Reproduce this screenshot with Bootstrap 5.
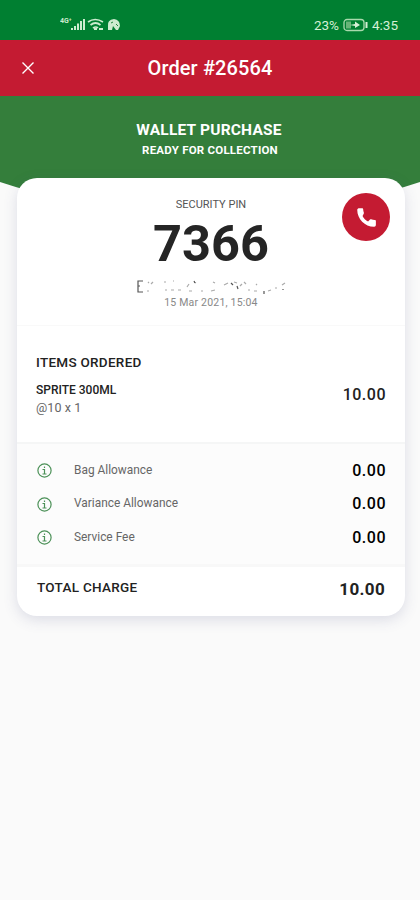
<!DOCTYPE html>
<html lang="en">
<head>
<meta charset="utf-8">
<meta name="viewport" content="width=device-width, initial-scale=1">
<title>Order #26564</title>
<link href="https://cdn.jsdelivr.net/npm/bootstrap@5.3.0/dist/css/bootstrap.min.css" rel="stylesheet">
<style>
body{font-family:Roboto,"Liberation Sans",sans-serif;background:#fafafa;color:#222;height:900px;overflow:hidden}
.status{height:40px;background:#007f31;color:#d5efd5;font-size:13.5px;padding:10px 22px 0 60px}
.clock{height:30px}
.topbar{height:56px;background:#c41b32;padding:0 21px}
.topbar h1{font-size:20px;font-weight:500;letter-spacing:.12px}
.side{width:14px}
.hero{height:97px;background:#347e3b;clip-path:path("M0 0H420V86Q405 91 390 95H30Q15 91 0 86Z");color:#fff;padding:24px 2px 0 0}
.kind{font-size:15.5px;line-height:20px;font-weight:700;letter-spacing:.2px}
.ready{font-size:11.5px;line-height:20px;font-weight:700;letter-spacing:.22px;padding-left:2px}
.order{margin:-15px 15px 0 17px;height:438px;border-radius:20px;border:0;box-shadow:0 4px 14px rgba(70,75,130,.17);overflow:hidden}
.pin-area{height:148px;padding-top:19px;border-bottom:1px solid #f9f9f9}
.cap{font-size:11px;line-height:16px;color:#555}
.pin{font-size:50.5px;line-height:62px;font-weight:700;color:#252525}
.name{height:16px;margin-top:3px}
.date{font-size:10.5px;line-height:13px;margin-top:2px;color:#888;letter-spacing:.2px}
.call{width:48px;height:48px;right:15px;top:15px;background:#c41b32}
.items{height:118px;padding:26px 19px 0 19px;border-bottom:2px solid #f5f6f6}
.heading{font-size:13.5px;line-height:20px;font-weight:500;color:#222;letter-spacing:.28px}
.item{font-size:12px;line-height:17px;font-weight:500;padding-top:2px}
.qty{font-size:12.5px;line-height:17px;color:#666;letter-spacing:.1px}
.amount{font-size:16px;line-height:20px;font-weight:500;letter-spacing:.5px}
.items .amount{margin-bottom:7px}
.fees{height:123px;padding:10px 19px 0 20px;background:#fcfcfc;border-bottom:3px solid #f8f8f8}
.fee{height:33.5px;font-size:11.9px;color:#666}
.fee svg{margin-right:22px}
.total{padding:10px 20px 0 20px}
.total .heading{margin-bottom:3px}
.total .amount{font-size:17px;font-weight:700;letter-spacing:.35px}
</style>
<script src="https://cdn.jsdelivr.net/npm/bootstrap@5.3.0/dist/js/bootstrap.bundle.min.js"></script>
</head>
<body>
<div class="status d-flex justify-content-between">
  <svg width="62" height="20" viewBox="0 0 62 20" fill="#cdebcf">
    <text x="0" y="13" font-size="7" font-weight="700">4G⁺</text>
    <path d="M11 18h2v3h-2zM14 16h2v5h-2zM17 13.500h2V21h-2zM20 11h2v10h-2zM23 9h2v12h-2z"/>
    <g fill="none" stroke="#cdebcf" stroke-width="1.700"><path d="M28 12q7-5 15 0M30.500 15q5-4 10 0M33 18q3-2 5 0"/></g><path d="M34 18h3v2h-3zM39 18h4v2h-4z"/>
    <path d="M48 20V16q-1-6 6-7 6 1 6 7l-2 4h-2l-3-4-1 4z"/><path d="M51 13l2-1M56 14l2 2" stroke="#23863d"/>
  </svg>
  <div class="clock d-flex align-items-center">
    <span>23%</span>
    <svg class="mx-1" width="25" height="14" viewBox="0 0 25 14"><rect x="1" y="1.500" width="20" height="11" rx="3" fill="none" stroke="#a9d9ad" stroke-width="1.300"/><rect x="3" y="3.500" width="5" height="7" fill="#67b477"/><path d="M7 7l5-1V3.500L17 7l-5 3V8z" fill="#d5efd5"/><path d="M23.500 4v6" stroke="#d5efd5" stroke-width="2"/></svg>
    <span>4:35</span>
  </div>
</div>
<header class="topbar d-flex align-items-center justify-content-between text-white">
  <svg class="side" height="14" viewBox="0 0 14 14"><path d="M1.500 1.500l11 11M12.500 1.500l-11 11" stroke="#fff" stroke-width="1.400"/></svg>
  <h1 class="m-0">Order #26564</h1>
  <span class="side"></span>
</header>
<section class="hero text-center">
  <div class="kind">WALLET PURCHASE</div>
  <div class="ready">READY FOR COLLECTION</div>
</section>
<main class="order card">
  <section class="pin-area text-center position-relative">
    <div class="cap">SECURITY PIN</div>
    <div class="pin">7366</div>
    <svg class="name d-block mx-auto" width="152" viewBox="0 0 152 16"><g fill="none" stroke="#555" stroke-width="1.200"><path d="M8 3H3v11h5M3 8h2"/><g stroke="#aaa"><path d="M13 4l1 1M16 6l2-2M12 13h2M29 4h2M38 3h1M30 12h2M36 12h3M43 12h3M52 9l2-3M54 13h3M59 4l2 1M66 13h2M76 13l4-1M80 5l-2-1M89 7l4-2M99 4l3 1M105 8l2-2M109 4l2 2M113 12h2M121 7l1-1M119 13h3M133 13l3-1M140 10h2M147 7l3-2"/></g><path d="M59 3l1 2M96 5l2 2M102 8l1 3M129 13v3M148 11v1"/></g></svg>
    <div class="date">15 Mar 2021, 15:04</div>
    <button class="call btn rounded-circle position-absolute p-0 border-0 d-flex align-items-center justify-content-center" aria-label="Call">
      <svg width="25" height="25" viewBox="0 0 24 24" fill="#fff"><path d="M8.200 10.600c1.200 2.400 2.900 4 5.300 5.200l1.900-1.900c.3-.3.700-.4 1.100-.2 1.100.4 2.200.6 3.400.6.600 0 1.100.4 1.100 1V19c0 1-.6 1.900-1.600 1.900C10.500 21 3.100 13.600 3.100 4.600 3.100 3.600 4 3 5 3h2.800c.6 0 1 .5 1 1.100 0 1.200.3 2.300.7 3.400.1.400 0 .8-.3 1.100z"/></svg>
    </button>
  </section>
  <section class="items">
    <div class="heading">ITEMS ORDERED</div>
    <div class="d-flex justify-content-between align-items-center pt-2">
      <div><div class="item">SPRITE 300ML</div><div class="qty">@10 x 1</div></div>
      <div class="amount">10.00</div>
    </div>
  </section>
  <section class="fees">
    <div class="fee d-flex align-items-center"><svg width="15" height="15" viewBox="0 0 15 15" fill="none" stroke="#4c9158" stroke-width="1.200"><circle cx="7.500" cy="7.500" r="6.600"/><path d="M7.500 3.500v1.500M5.500 6.500h2v4.500M5.500 11h4"/></svg><span class="me-auto">Bag Allowance</span><span class="amount text-black">0.00</span></div>
    <div class="fee d-flex align-items-center"><svg width="15" height="15" viewBox="0 0 15 15" fill="none" stroke="#4c9158" stroke-width="1.200"><circle cx="7.500" cy="7.500" r="6.600"/><path d="M7.500 3.500v1.500M5.500 6.500h2v4.500M5.500 11h4"/></svg><span class="me-auto">Variance Allowance</span><span class="amount text-black">0.00</span></div>
    <div class="fee d-flex align-items-center"><svg width="15" height="15" viewBox="0 0 15 15" fill="none" stroke="#4c9158" stroke-width="1.200"><circle cx="7.500" cy="7.500" r="6.600"/><path d="M7.500 3.500v1.500M5.500 6.500h2v4.500M5.500 11h4"/></svg><span class="me-auto">Service Fee</span><span class="amount text-black">0.00</span></div>
  </section>
  <section class="total d-flex justify-content-between align-items-center">
    <span class="heading">TOTAL CHARGE</span><span class="amount">10.00</span>
  </section>
</main>
</body>
</html>
